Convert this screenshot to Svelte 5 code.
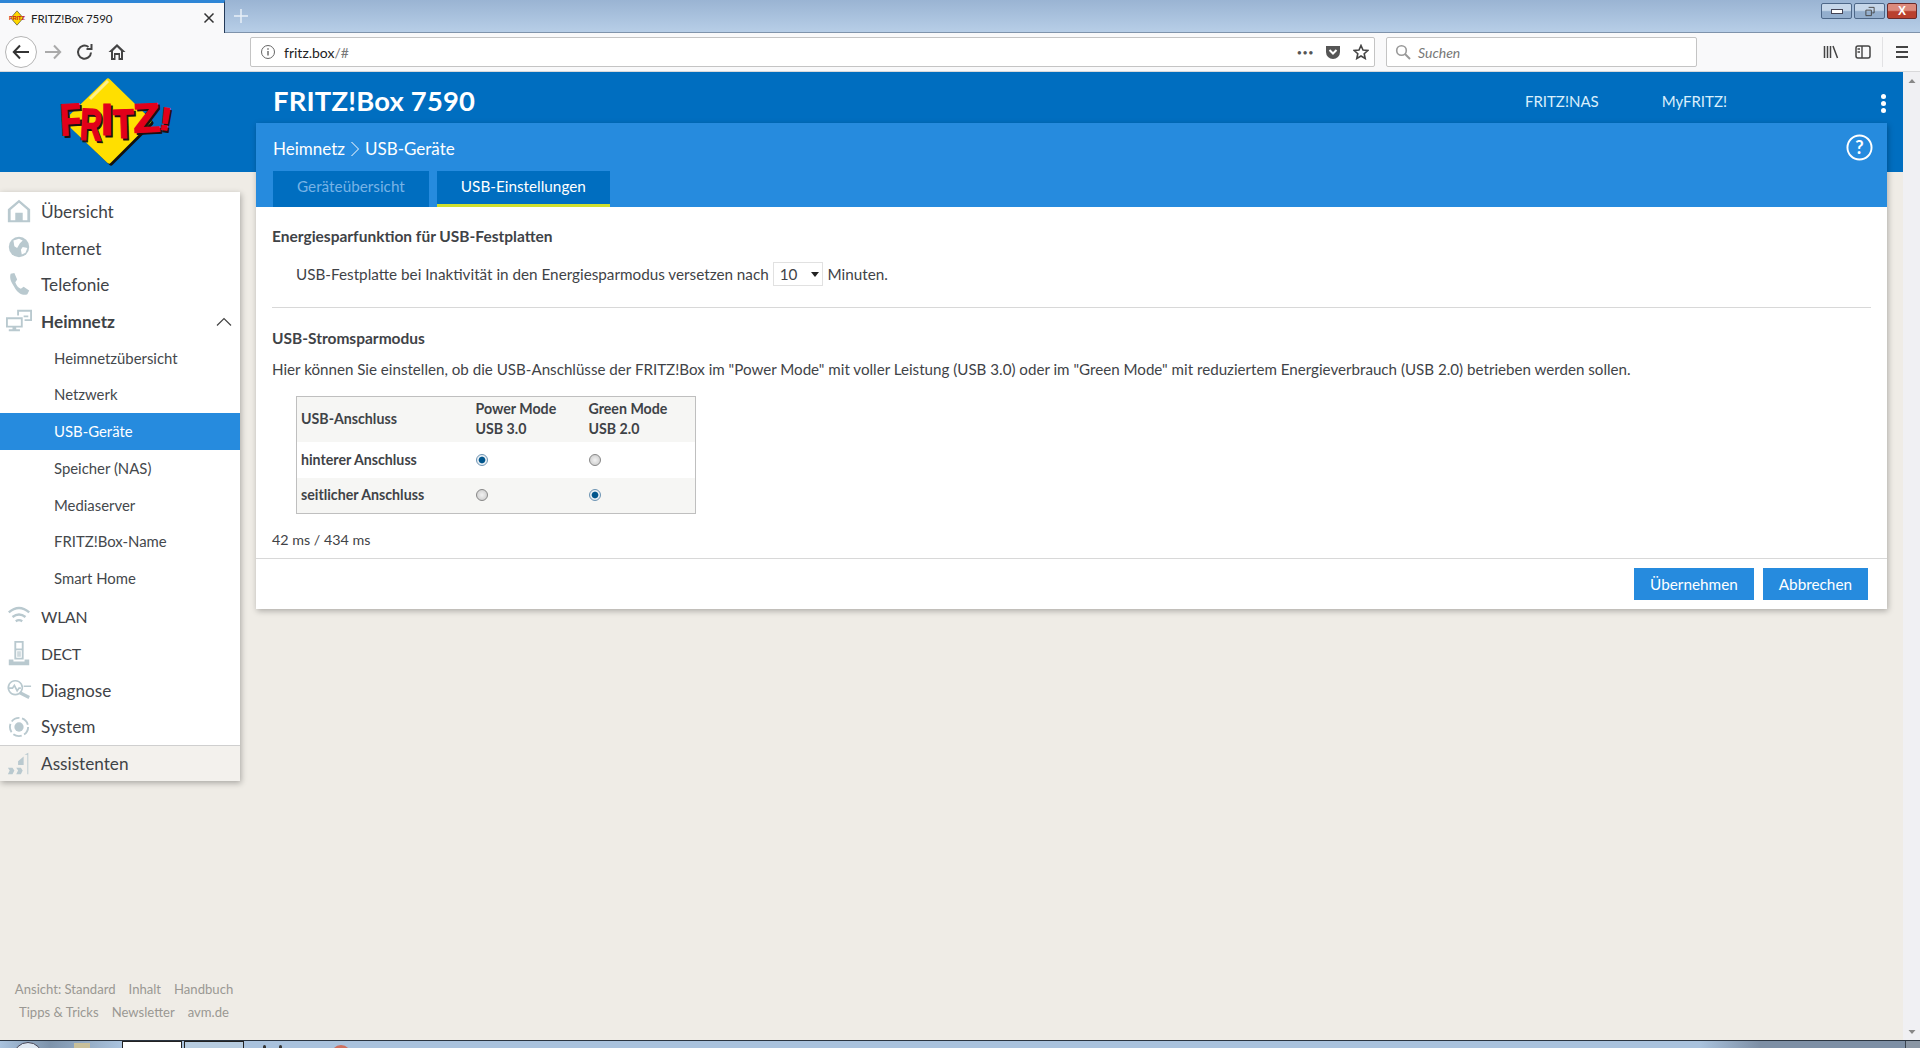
<script>
  const main = [
    { t: 'Übersicht', i: 'home' }, { t: 'Internet', i: 'globe' }, { t: 'Telefonie', i: 'phone' }
  ];
  const subs = ['Heimnetzübersicht', 'Netzwerk', 'USB-Geräte', 'Speicher (NAS)', 'Mediaserver', 'FRITZ!Box-Name', 'Smart Home'];
  const after = [
    { t: 'WLAN', i: 'wifi', caps: true }, { t: 'DECT', i: 'dect', caps: true }, { t: 'Diagnose', i: 'diag' }, { t: 'System', i: 'sys' }
  ];
  const letters = [
    { c: 'F', x: 5, y: 63, s: 45, w: 21, r: -3 },
    { c: 'R', x: 25, y: 68, s: 45, w: 22, r: 3 },
    { c: 'I', x: 46, y: 63, s: 44, w: 12, r: 0 },
    { c: 'T', x: 58, y: 66, s: 41, w: 21, r: -2 },
    { c: 'Z', x: 78, y: 60, s: 41, w: 27, r: -3 },
    { c: '!', x: 105, y: 58, s: 32, w: 12, r: 8 }
  ];
</script>

{#snippet icon(name)}
  <svg class="nav-ic" viewBox="0 0 28 28" width="28" height="28" fill="#b9c9cf" stroke="none">
    {#if name === 'home'}
      <path d="M14 2 2 12v14h24V12zM14 5l9 8v11h-5v-8h-8v8H5V13z" fill-rule="evenodd"/>
    {:else if name === 'globe'}
      <circle cx="14" cy="13" r="11"/><path fill="#fff" d="M8 6l6-2 4 2-3 3-3 5-3-2zM18 13l5 1-2 5-4 2-1-5z"/>
    {:else if name === 'phone'}
      <path d="M5 2l4-1 3 7-2 3c1 3 3 6 6 7l3-2 6 4-2 4c-4 2-10-1-13-6S3 8 5 2z"/>
    {:else if name === 'net'}
      <path fill-rule="evenodd" d="M0 10h18v11H0zM2 12v7h14v-7zM7 21h4v2h4v2H3v-2h4zM12 2h16v12h-8v-2h6V4H14v4h-2zM19 8h5v2h-5z"/>
    {:else if name === 'wifi'}
      <path fill="none" stroke="#b9c9cf" stroke-width="2.600" d="M3 9c7-6 15-6 22 0M7 14c4.500-3.500 9.500-3.500 14 0M10.500 18.500c2.500-1.600 4.500-1.600 7 0"/>
    {:else if name === 'dect'}
      <path fill-rule="evenodd" d="M9 0h10v20H9zM11 2v6h6V2zM11 10v8h6v-8zM3 20h5v2h12v-2h5v6H3z"/><path fill="#cfdade" d="M12 11h4v6h-4z"/>
    {:else if name === 'diag'}
      <path fill="none" stroke="#b9c9cf" stroke-width="1.800" d="M10 4a7.500 7.500 0 1 0 .01 0zM3 12h4l2-3 3 6 2-3h2M19 10h8"/><path fill="none" stroke="#b9c9cf" stroke-width="3.500" d="M15 17l10 5"/>
    {:else if name === 'sys'}
      <circle cx="14" cy="14" r="5"/><circle cx="14" cy="14" r="9.800" fill="none" stroke="#b9c9cf" stroke-width="2" stroke-dasharray="9.500 2.800"/>
    {:else}
      <path d="M20 4l4-2v23h-1V4zM13 11l6-5v9h-6zM2 18h5l2 3-2 4H2l2-4zM11 18h5l2 3-2 4h-5l2-4z"/>
    {/if}
  </svg>
{/snippet}

<div class="screen">
  <header class="chrome">
    <div class="tabstrip">
      <div class="tab">
        <svg viewBox="0 0 20 20" width="18" height="18"><path fill="#ffd800" stroke="#222" stroke-width=".6" d="M10 2l7 8-7 8-7-8z"/><text x="1" y="12.500" font-size="6.500" font-weight="700" font-family="Liberation Sans" fill="#c8201c" textLength="18" lengthAdjust="spacingAndGlyphs">FRITZ</text></svg>
        <span class="tabtitle">FRITZ!Box 7590</span>
        <svg class="tabx" viewBox="0 0 12 12" width="12" height="12"><path d="M1.500 1.500l9 9M10.500 1.500l-9 9" stroke="#333" stroke-width="1.500"/></svg>
      </div>
      <svg class="plus" viewBox="0 0 16 16" width="16" height="16"><path d="M8 1v14M1 8h14" stroke="#e8f0f8" stroke-width="1.500"/></svg>
      <div class="winbtns">
        <span class="wb"><i class="min"></i></span>
        <span class="wb"><svg viewBox="0 0 12 12" width="12" height="12"><path fill="none" stroke="#444" d="M4.500 1.500h6v6h-2M1.500 4.500h6v6h-6z"/></svg></span>
        <span class="wb close">X</span>
      </div>
    </div>
    <div class="toolbar">
      <div class="back"><svg viewBox="0 0 20 20" width="20" height="20"><path d="M18 10H3M9 3.500 2.800 10 9 16.500" fill="none" stroke="#333" stroke-width="2"/></svg></div>
      <svg class="tb fwd" viewBox="0 0 20 20" width="20" height="20"><path d="M2 10h15M11 3.500 17.200 10 11 16.500" fill="none" stroke="#aaa" stroke-width="2"/></svg>
      <svg class="tb reload" viewBox="0 0 20 20" width="20" height="20"><path d="M16 10.500A6.500 6.500 0 1 1 13.500 5M16.500 2v5h-5" fill="none" stroke="#444" stroke-width="2"/></svg>
      <svg class="tb home" viewBox="0 0 20 20" width="20" height="20"><path d="M10 2 1.500 10H4v8h4.500v-5h3v5H16v-8h2.500zM6 9l4-4 4 4v7h-1v-5H7v5H6z" fill="#444" fill-rule="evenodd"/></svg>
      <div class="url">
        <svg viewBox="0 0 16 16" width="16" height="16"><circle cx="8" cy="8" r="6.500" fill="none" stroke="#666"/><path d="M8 7v4.500M8 4.200v1.500" stroke="#666" stroke-width="1.400"/></svg>
        <span class="urltext">fritz.box<span class="urlgrey">/#</span></span>
        <span class="dots">•••</span>
        <svg viewBox="0 0 16 16" width="16" height="16"><path fill="#555" d="M1 2h14v6a7 7 0 0 1-14 0z"/><path d="M4.500 6 8 9.500 11.500 6" fill="none" stroke="#fff" stroke-width="2"/></svg>
        <svg class="star" viewBox="0 0 16 16" width="16" height="16"><path d="M8 1.500l2 4.500 4.800.5-3.600 3.200 1 4.800L8 12l-4.200 2.500 1-4.800L1.200 6.500 6 6z" fill="none" stroke="#444" stroke-width="1.600"/></svg>
      </div>
      <div class="search">
        <svg viewBox="0 0 16 16" width="16" height="16"><circle cx="6.500" cy="6.500" r="4.800" fill="none" stroke="#999" stroke-width="1.600"/><path d="M10 10l5 5" stroke="#999" stroke-width="2"/></svg>
        <span>Suchen</span>
      </div>
      <svg class="tb lib" viewBox="0 0 16 16" width="16" height="16"><path d="M1.500 2v12M4.500 2v12M7.500 2v12M10 2l4.500 12" stroke="#444" stroke-width="1.500" fill="none"/></svg>
      <svg class="tb side" viewBox="0 0 16 16" width="16" height="16"><rect x="1" y="2" width="14" height="12" rx="2" fill="none" stroke="#444" stroke-width="1.500"/><path d="M7 2v12M2.500 5H5M2.500 8H5" stroke="#444" stroke-width="1.400"/></svg>
      <span class="tbsep"></span>
      <svg class="tb" viewBox="0 0 16 16" width="16" height="16"><path d="M2 3h12M2 8h12M2 13h12" stroke="#444" stroke-width="1.800"/></svg>
    </div>
  </header>

  <div class="viewport">
    <div class="page">
      <aside class="left">
        <div class="logo">
          <svg viewBox="0 0 130 100" width="130" height="100">
            <path d="M55 12 96 51 56 91 15 51z" fill="#111" stroke="#111" stroke-width="5" stroke-linejoin="round"/>
            <path d="M53 9 94 49 54 89 12 49z" fill="#ffdf00" stroke="#ffdf00" stroke-width="5" stroke-linejoin="round"/>
            <path d="M35 27 53 9" stroke="#fff08a" stroke-width="3" fill="none"/>
            <g font-family="Liberation Sans" font-weight="700">
              {#each letters as l}
                <text x={l.x + 2} y={l.y + 2} font-size={l.s} textLength={l.w} lengthAdjust="spacingAndGlyphs" fill="#1c1010" stroke="#1c1010" stroke-width="1.200" transform="rotate({l.r} {l.x + l.w / 2} {l.y - 15})">{l.c}</text>
              {/each}
              {#each letters as l}
                <text x={l.x} y={l.y} font-size={l.s} textLength={l.w} lengthAdjust="spacingAndGlyphs" fill="#e2001a" stroke="#e2001a" stroke-width="1.200" transform="rotate({l.r} {l.x + l.w / 2} {l.y - 15})">{l.c}</text>
              {/each}
            </g>
          </svg>
        </div>
        <nav class="nav">
          {#each main as m}
            <div class="item">{@render icon(m.i)}<span>{m.t}</span></div>
          {/each}
          <div class="item bold">{@render icon('net')}<span>Heimnetz</span>
            <svg class="chev" viewBox="0 0 16 10" width="16" height="10"><path d="M1 8.500 8 1.500l7 7" fill="none" stroke="#444" stroke-width="1.200"/></svg>
          </div>
          {#each subs as s, i}
            <div class="sub" class:active={i === 2}>{s}</div>
          {/each}
          {#each after as m}
            <div class="item" class:caps={m.caps}>{@render icon(m.i)}<span>{m.t}</span></div>
          {/each}
          <div class="item wizard">{@render icon('wiz')}<span>Assistenten</span></div>
        </nav>
        <footer class="foot">
          <div class="footrow"><span>Ansicht: Standard</span><span>Inhalt</span><span>Handbuch</span></div>
          <div class="footrow"><span>Tipps &amp; Tricks</span><span>Newsletter</span><span>avm.de</span></div>
        </footer>
      </aside>

      <main class="right">
        <div class="topbar">
          <h1>FRITZ!Box 7590</h1>
          <a class="toplink nas">FRITZ!NAS</a>
          <a class="toplink my">MyFRITZ!</a>
          <span class="kebab"><i></i><i></i><i></i></span>
        </div>
        <section class="panel">
          <div class="panelhead">
            <div class="crumbrow">
              <span class="crumb">Heimnetz</span>
              <svg viewBox="0 0 10 20" width="10" height="20"><path d="M1.500 3l7 7-7 7" fill="none" stroke="#fff"/></svg>
              <span class="crumb">USB-Geräte</span>
              <svg class="help" viewBox="0 0 28 28" width="27" height="27"><circle cx="14" cy="14" r="12.500" fill="none" stroke="#fff" stroke-width="2"/><text x="14" y="20.500" text-anchor="middle" font-size="19" font-weight="700" font-family="Lato" fill="#fff">?</text></svg>
            </div>
            <div class="tabs">
              <span class="ptab">Geräteübersicht</span>
              <span class="ptab on">USB-Einstellungen</span>
            </div>
          </div>
          <div class="body">
            <h2>Energiesparfunktion für USB-Festplatten</h2>
            <p class="energy">USB-Festplatte bei Inaktivität in den Energiesparmodus versetzen nach <span class="select">10<i></i></span> Minuten.</p>
            <hr />
            <h2 class="h2b">USB-Stromsparmodus</h2>
            <p class="desc">Hier können Sie einstellen, ob die USB-Anschlüsse der FRITZ!Box im "Power Mode" mit voller Leistung (USB 3.0) oder im "Green Mode" mit reduziertem Energieverbrauch (USB 2.0) betrieben werden sollen.</p>
            <table>
              <thead>
                <tr><th class="c1">USB-Anschluss</th><th class="c2">Power Mode<br />USB 3.0</th><th class="c3">Green Mode<br />USB 2.0</th></tr>
              </thead>
              <tbody>
                <tr><th class="c1">hinterer Anschluss</th><td><span class="radio on"></span></td><td><span class="radio"></span></td></tr>
                <tr class="alt"><th class="c1">seitlicher Anschluss</th><td><span class="radio"></span></td><td><span class="radio on"></span></td></tr>
              </tbody>
            </table>
            <p class="timing">42 ms / 434 ms</p>
          </div>
          <div class="actions">
            <span class="btn">Übernehmen</span>
            <span class="btn">Abbrechen</span>
          </div>
        </section>
      </main>
    </div>
    <div class="scrollbar">
      <svg viewBox="0 0 8 6" width="8" height="6"><path d="M4 1 7.500 5H.5z" fill="#888"/></svg>
      <svg viewBox="0 0 8 6" width="8" height="6"><path d="M4 5 7.500 1H.5z" fill="#888"/></svg>
    </div>
  </div>

  <div class="taskbar">
    <span class="orb"></span>
    <span class="folder"></span>
    <span class="app"></span>
    <span class="app dark"></span>
    <span class="blip b1"></span><span class="blip b2"></span><span class="blip red"></span>
    <span class="corner"></span>
  </div>
</div>

<style>
  :global(body) { margin: 0; }
  .screen { width: 1920px; height: 1048px; overflow: hidden; display: flex; flex-direction: column; font-family: Lato, sans-serif; color: #3c4043; background: #efece6; }

  .chrome { flex: none; height: 72px; background: #f9f9fa; }
  .tabstrip { height: 33px; display: flex; align-items: flex-start; background: linear-gradient(#9ab4d3, #b7cee7); border-bottom: 1px solid #7f93ab; box-sizing: border-box; position: relative; }
  .tab { width: 225px; height: 33px; box-sizing: border-box; background: #f9f9fa; border-top: 3px solid #2f86d6; border-right: 1px solid #243a58; display: flex; align-items: center; padding: 0 9px 0 8px; gap: 5px; }
  .tabtitle { font: 11.500px "Lato", sans-serif; letter-spacing: -.1px; color: #222; flex: 1; }
  .plus { margin: 8px 0 0 8px; }
  .winbtns { margin-left: auto; display: flex; gap: 2px; margin-right: 3px; margin-top: 3px; }
  .wb { width: 31px; height: 16px; box-sizing: border-box; border: 1px solid #4d6788; border-radius: 2px; background: linear-gradient(#c6d7ea 45%, #93aecd 55%); display: flex; align-items: center; justify-content: center; }
  .wb svg { height: 11px; }
  .min { width: 10px; height: 3px; border: 1px solid #445; background: #fff; display: block; }
  .close { background: linear-gradient(#dc8a7c 45%, #b9402e 55%); border-color: #6a2a2a; color: #fff; font: 700 12px "Liberation Sans", sans-serif; width: 30px; }

  .toolbar { height: 38px; display: flex; align-items: center; padding-left: 5px; border-bottom: 1px solid #d8d8da; }
  .back { width: 30px; height: 30px; border: 1px solid #b5b5b5; border-radius: 50%; background: #fff; display: flex; align-items: center; justify-content: center; }
  .tb { flex: none; }
  .fwd { margin-left: 6px; }
  .reload { margin-left: 12px; }
  .home { margin-left: 12px; }
  .url { margin-left: 123px; width: 1125px; height: 30px; box-sizing: border-box; background: #fff; border: 1px solid #c4c4c4; border-radius: 2px; display: flex; align-items: center; padding: 0 5px 0 9px; }
  .urltext { font-size: 14px; color: #222; margin-left: 8px; flex: 1; }
  .urlgrey { color: #777; }
  .dots { font-size: 9px; color: #555; margin-right: 11px; letter-spacing: .5px; }
  .star { margin-left: 12px; }
  .search { margin-left: 11px; width: 311px; height: 30px; box-sizing: border-box; background: #fff; border: 1px solid #c4c4c4; border-radius: 2px; display: flex; align-items: center; padding-left: 8px; gap: 7px; font-size: 14px; font-style: italic; color: #777; }
  .lib { margin-left: 126px; }
  .side { margin-left: 16px; }
  .tbsep { width: 1px; height: 30px; background: #e2e2e4; margin: 0 11px 0 11px; }

  .viewport { flex: 1; min-height: 0; display: flex; }
  .page { flex: 1; min-width: 0; display: flex; background: linear-gradient(#006ec0 100px, #efece6 100px); }
  .scrollbar { width: 17px; background: #f0f0f3; box-sizing: border-box; display: flex; flex-direction: column; justify-content: space-between; align-items: center; padding: 6px 0 5px; }

  .left { width: 256px; flex: none; display: flex; flex-direction: column; }
  .logo { height: 100px; padding-left: 55px; box-sizing: border-box; }
  .nav { margin-top: 20px; width: 240px; background: #fff; box-shadow: 1px 2px 6px rgba(0,0,0,.3); padding-top: 1px; }
  .item { height: 36.700px; display: flex; align-items: center; font-size: 17.200px; color: #3f4347; position: relative; }
  .item.caps { font-size: 15.800px; letter-spacing: -.2px; }
  .sub:nth-child(11) { margin-bottom: 2px; }
  .nav-ic { margin: 0 9px 0 6px; flex: none; width: 26px; height: 26px; }
  .bold { font-weight: 700; }
  .chev { position: absolute; right: 8px; top: 14px; }
  .sub { height: 36.700px; line-height: 36.700px; padding-left: 54px; font-size: 14.900px; color: #44484c; }
  .sub.active { background: #268bde; color: #fff; }
  .wizard { background: #f3f1ed; border-top: 1px solid #cfcfcf; height: 36px; box-sizing: border-box; }
  .foot { margin-top: auto; padding-bottom: 16px; font-size: 13.100px; color: #9a9893; }
  .footrow { display: flex; justify-content: center; gap: 13px; height: 23px; line-height: 23px; width: 248px; }

  .right { flex: 1; min-width: 0; display: flex; flex-direction: column; padding-right: 16px; }
  .topbar { height: 51px; display: flex; align-items: center; color: #fff; position: relative; padding: 6px 0 0 17px; box-sizing: border-box; flex: none; }
  h1 { font-size: 27.400px; font-weight: 700; margin: 0; letter-spacing: .2px; }
  .toplink { font-size: 15px; color: #d9effc; }
  .nas { margin-left: auto; }
  .my { margin-left: 63px; margin-right: 160px; }
  .kebab { position: absolute; right: 1px; top: 22px; display: flex; flex-direction: column; gap: 2px; }
  .kebab i { width: 5px; height: 5px; border-radius: 50%; background: #fff; display: block; }

  .panel { background: #fff; box-shadow: 1px 2px 6px rgba(0,0,0,.28); }
  .panelhead { background: #268bde; height: 84px; padding-left: 17px; display: flex; flex-direction: column; }
  .crumbrow { height: 48px; display: flex; align-items: center; gap: 5px; color: #fff; font-size: 17px; position: relative; padding-top: 3px; box-sizing: border-box; }
  .help { position: absolute; right: 14px; top: 11px; }
  .tabs { display: flex; gap: 8px; }
  .ptab { height: 36px; box-sizing: border-box; padding: 0 24px; line-height: 31px; background: #006ec0; color: #77b3e6; font-size: 15.300px; }
  .ptab.on { color: #fff; border-bottom: 3px solid #d0df2e; }

  .body { padding: 19px 16px 0; height: 351px; box-sizing: border-box; font-size: 15.150px; color: #3f4347; }
  h2 { margin: 0; font-size: 15.500px; font-weight: 700; line-height: 21px; }
  .energy { margin: 15px 0 0 24px; line-height: 24px; height: 24px; font-size: 15.250px; }
  .select { display: inline-flex; align-items: center; width: 50px; height: 24px; box-sizing: border-box; padding: 0 6px; margin: 0 1px 0 0; background: #fff; border: 1px solid #e1e1e1; position: relative; vertical-align: top; }
  .select i { position: absolute; right: 3px; top: 9px; border: 4px solid transparent; border-top: 5px solid #222; border-bottom: 0; }
  hr { border: 0; border-top: 1px solid #d8d8d8; margin: 21px 0 0; }
  .h2b { margin-top: 20px; }
  .desc { margin: 9px 0 0; line-height: 22px; white-space: nowrap; }
  table { margin: 16px 0 0 24px; border-collapse: collapse; table-layout: fixed; border: 1px solid #bfbfbf; width: 400px; font-size: 14.200px; }
  th { font-weight: 700; text-align: left; padding: 0 4px; line-height: 20px; }
  thead tr { height: 45px; }
  thead tr, .alt { background: #f6f6f4; }
  .c1 { width: 170.500px; }
  .c2 { width: 113px; padding: 0; }
  .c3 { padding: 0; }
  td { padding: 0; }
  tbody tr { height: 36px; }
  .radio { display: block; width: 10px; height: 10px; border-radius: 50%; background: radial-gradient(#f2f2f2, #c6c6c6); border: 1px solid #888; }
  .radio.on { background: radial-gradient(circle at 50% 50%, #00558c 0 2.800px, #e8eef3 3.800px); border-color: #6d94b3; }
  .timing { margin: 15px 0 0; line-height: 22px; font-size: 14.300px; }
  .actions { border-top: 1px solid #d8d8d8; height: 51px; box-sizing: border-box; display: flex; justify-content: flex-end; align-items: center; gap: 9px; padding-right: 19px; }
  .btn { height: 32px; line-height: 32px; padding: 0 16px; background: #268bde; color: #fff; font-size: 15.300px; }

  .taskbar { flex: none; height: 8px; background: linear-gradient(90deg, #a9c2dd 0, #7d93ab 50px, #a9c2dd 120px, #a9c2dd 1700px, #7d8fa5 1760px, #7d8fa5 100%); border-top: 1px solid #2a3440; box-sizing: border-box; position: relative; overflow: hidden; }
  .taskbar span { position: absolute; }
  .orb { left: 13px; top: 1px; width: 28px; height: 28px; border-radius: 50%; background: #dfe8f2; border: 1px solid #445; }
  .folder { left: 74px; top: 2px; width: 16px; height: 8px; background: #c9c09a; }
  .app { left: 122px; top: 0; width: 58px; height: 8px; background: #fff; border: 1px solid #222; }
  .app.dark { left: 184px; background: #b7cce0; }
  .blip { top: 4px; width: 3px; height: 5px; background: #333; border-radius: 2px; }
  .b1 { left: 263px; } .b2 { left: 279px; }
  .taskbar .red { left: 331px; top: 4px; width: 20px; height: 20px; border-radius: 50%; background: #cf6f5e; }
  .corner { right: 0; top: 0; width: 14px; height: 8px; background: #8a96a4; border-left: 1px solid #3a4450; }
</style>
